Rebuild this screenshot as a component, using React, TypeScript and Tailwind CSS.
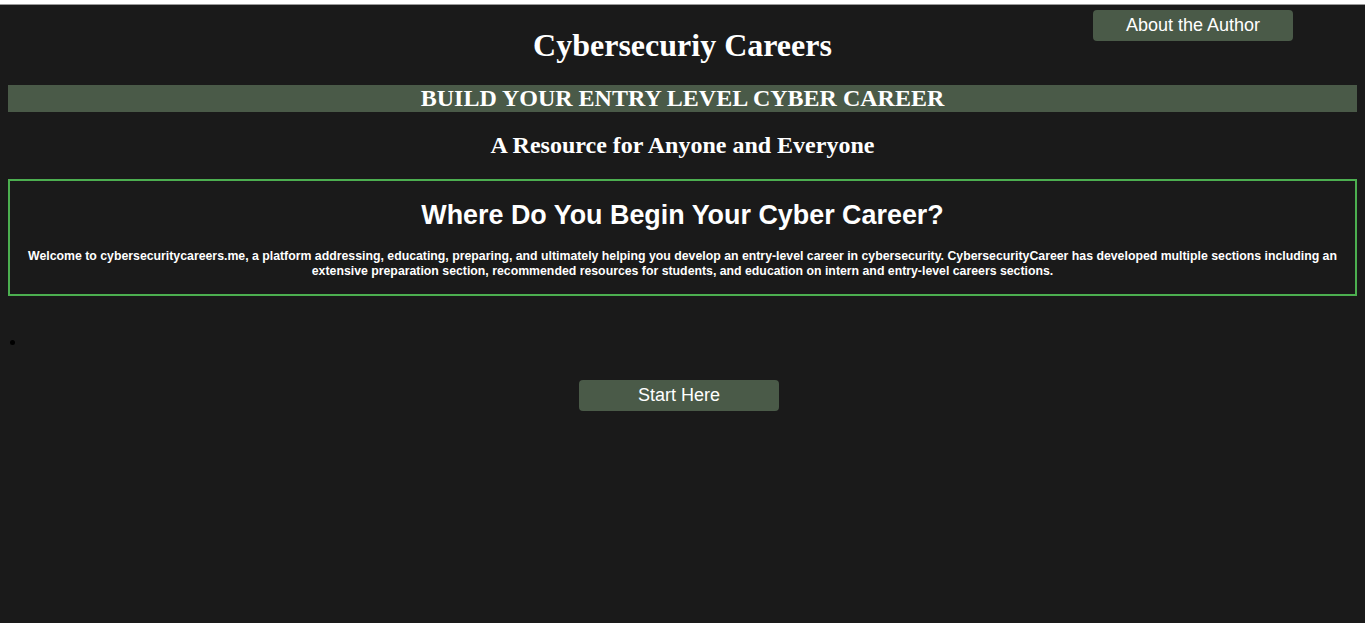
const intro =
    'Welcome to cybersecuritycareers.me, a platform addressing, educating, preparing, and ultimately helping you develop an entry-level career in cybersecurity. CybersecurityCareer has developed multiple sections including an extensive preparation section, recommended resources for students, and education on intern and entry-level careers sections.'

export default function App() {
    return (
        <div className="min-h-screen bg-[#1a1a1a] text-white font-['Liberation_Serif',serif]">
            <div className="h-[4px] bg-white" />
            <div className="h-px bg-[#9a9a9a]" />

            <div className="relative px-2">
                <button className="absolute right-[72px] top-[5px] w-[200px] h-[31px] rounded bg-[#4a5a48] text-white text-[18px] font-['Liberation_Sans',sans-serif]">
                    About the Author
                </button>

                <h1 className="pt-[22px] text-center text-[32px] font-bold leading-[37px]">Cybersecuriy Careers</h1>

                <h2 className="mt-[21px] bg-[#4a5a48] text-center text-[24px] font-bold leading-[27px]">
                    BUILD YOUR ENTRY LEVEL CYBER CAREER
                </h2>

                <h2 className="mt-[19px] text-center text-[24px] font-bold leading-[28px]">A Resource for Anyone and Everyone</h2>

                <section className="mt-[20px] border-2 border-[#4caf50] px-[10px] pt-[19px] pb-[15px] text-center font-['Liberation_Sans',sans-serif]">
                    <h3 className="text-[26.9px] font-bold leading-[31px]">Where Do You Begin Your Cyber Career?</h3>
                    <p className="mt-[18px] text-[12.3px] font-bold leading-[15px]">{intro}</p>
                </section>

                <div className="mt-[44px] h-[5px] flex items-center pl-[2px]">
                    <span className="block w-[5px] h-[5px] rounded-full bg-black" />
                </div>

                <div className="mt-[35px] flex justify-center pr-[7px]">
                    <button className="w-[200px] h-[31px] rounded bg-[#4a5a48] text-white text-[18px] font-['Liberation_Sans',sans-serif]">
                        Start Here
                    </button>
                </div>
            </div>
        </div>
    )
}
